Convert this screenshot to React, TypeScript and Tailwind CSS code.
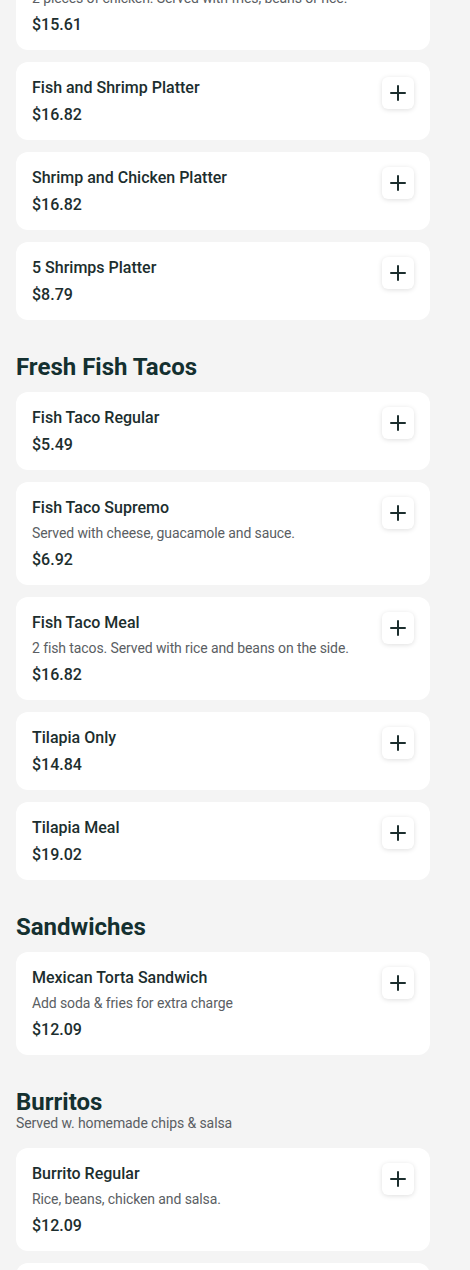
import { Plus } from "lucide-react";

type Item = { name: string; desc?: string; price: string };
type Section = { title?: string; subtitle?: string; items: Item[] };

const sections: Section[] = [
  {
    items: [
      {
        name: "Chicken Platter",
        desc: "2 pieces of chicken. Served with fries, beans or rice.",
        price: "$15.61",
      },
      { name: "Fish and Shrimp Platter", price: "$16.82" },
      { name: "Shrimp and Chicken Platter", price: "$16.82" },
      { name: "5 Shrimps Platter", price: "$8.79" },
    ],
  },
  {
    title: "Fresh Fish Tacos",
    items: [
      { name: "Fish Taco Regular", price: "$5.49" },
      {
        name: "Fish Taco Supremo",
        desc: "Served with cheese, guacamole and sauce.",
        price: "$6.92",
      },
      {
        name: "Fish Taco Meal",
        desc: "2 fish tacos. Served with rice and beans on the side.",
        price: "$16.82",
      },
      { name: "Tilapia Only", price: "$14.84" },
      { name: "Tilapia Meal", price: "$19.02" },
    ],
  },
  {
    title: "Sandwiches",
    items: [
      {
        name: "Mexican Torta Sandwich",
        desc: "Add soda & fries for extra charge",
        price: "$12.09",
      },
    ],
  },
  {
    title: "Burritos",
    subtitle: "Served w. homemade chips & salsa",
    items: [
      {
        name: "Burrito Regular",
        desc: "Rice, beans, chicken and salsa.",
        price: "$12.09",
      },
      {
        name: "Burrito Supremo",
        desc: "Rice, beans, chicken, cheese and sour cream.",
        price: "$13.29",
      },
    ],
  },
];

function MenuCard({ item }: { item: Item }) {
  return (
    <div className="bg-white rounded-xl pl-4 pr-4 pt-4 pb-[15px] flex justify-between items-start">
      <div className="flex flex-col">
        <div className="text-base leading-5 font-medium text-[#1c2e2e]">
          {item.name}
        </div>
        {item.desc && (
          <div className="mt-[5px] text-sm leading-5 tracking-[-0.1px] text-[#5a5e63]">
            {item.desc}
          </div>
        )}
        <div className="mt-[7px] text-base leading-5 font-medium text-[#1c2e2e]">
          {item.price}
        </div>
      </div>
      <button className="shrink-0 -mt-px w-8 h-8 rounded-md bg-white flex items-center justify-center shadow-[0_1px_5px_rgba(0,0,0,0.13)] text-[#1c2e2e]">
        <Plus size={24} strokeWidth={2} />
      </button>
    </div>
  );
}

export default function App() {
  return (
    <main
      className="min-h-screen bg-[#f4f4f4] overflow-hidden"
      style={{ fontFamily: "Roboto, 'Liberation Sans', sans-serif" }}
    >
      <div className="w-[414px] ml-4 mt-[-53px] pb-10 flex flex-col">
        {sections.map((s, i) => (
          <section key={i} className={s.title ? "mt-[35px]" : ""}>
            {s.title && (
              <div>
                <h2 className="text-2xl leading-6 font-bold text-[#143030]">
                  {s.title}
                </h2>
                {s.subtitle && (
                  <p className="mt-[-1px] text-sm leading-5 tracking-[-0.1px] text-[#5a5e63]">
                    {s.subtitle}
                  </p>
                )}
              </div>
            )}
            <div
              className={
                "flex flex-col gap-3 " +
                (s.title ? (s.subtitle ? "mt-[15px]" : "mt-[13px]") : "")
              }
            >
              {s.items.map((it) => (
                <MenuCard key={it.name} item={it} />
              ))}
            </div>
          </section>
        ))}
      </div>
    </main>
  );
}
